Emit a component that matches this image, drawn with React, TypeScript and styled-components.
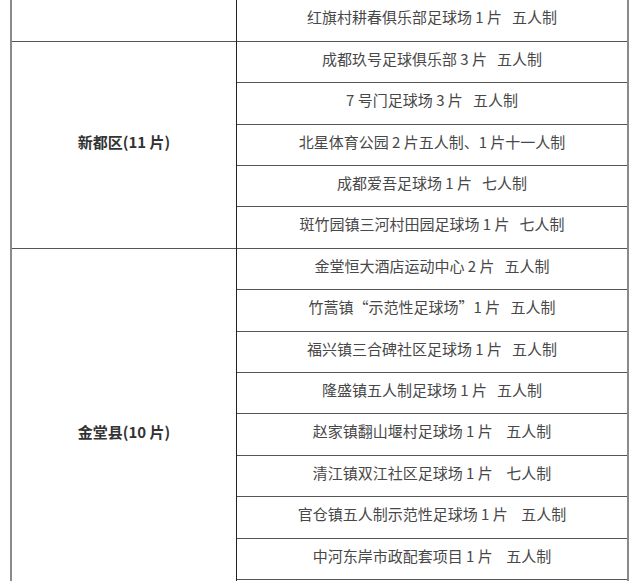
import styled, { createGlobalStyle } from "styled-components";

const districts = [
  {
    name: "",
    fields: ["红旗村耕春俱乐部足球场 1 片   五人制"],
  },
  {
    name: "新都区(11 片)",
    fields: [
      "成都玖号足球俱乐部 3 片   五人制",
      "7 号门足球场 3 片   五人制",
      "北星体育公园 2 片五人制、1 片十一人制",
      "成都爱吾足球场 1 片   七人制",
      "斑竹园镇三河村田园足球场 1 片   七人制",
    ],
  },
  {
    name: "金堂县(10 片)",
    // the last row runs past the bottom edge of the shot, so it stays blank
    fields: [
      "金堂恒大酒店运动中心 2 片   五人制",
      "竹蒿镇“示范性足球场”1 片   五人制",
      "福兴镇三合碑社区足球场 1 片   五人制",
      "隆盛镇五人制足球场 1 片   五人制",
      "赵家镇翻山堰村足球场 1 片    五人制",
      "清江镇双江社区足球场 1 片    七人制",
      "官仓镇五人制示范性足球场 1 片    五人制",
      "中河东岸市政配套项目 1 片    五人制",
      "",
    ],
  },
];

const GlobalStyle = createGlobalStyle`
  body {
    margin: 0;
    background: #ffffff;
    font-family: "Noto Sans CJK SC", "Liberation Sans", sans-serif;
  }
`;

const Page = styled.div`
  padding-left: 10px;
  overflow: hidden;
  height: 581px;
`;

const Table = styled.table`
  width: 619px;
  border-collapse: collapse;
  table-layout: fixed;
  border-left: 2px solid #8a8a8a;
  border-right: 2px solid #8a8a8a;
`;

const Row = styled.tr<{ $first?: boolean }>`
  height: 41.4px;
  & > td {
    border-top: ${(p) => (p.$first ? "none" : "1px solid #555")};
  }
`;

const DistrictCell = styled.td`
  width: 224px;
  border-right: 1px solid #222;
  text-align: center;
  vertical-align: middle;
  padding: 0 0 6px;
  font-size: 15px;
  font-weight: 700;
  color: #333;
  white-space: pre;
`;

const FieldCell = styled.td`
  text-align: center;
  vertical-align: top;
  padding: 6px 0 0;
  font-size: 15px;
  line-height: 22px;
  color: #484848;
  white-space: pre;
`;

export default function App() {
  return (
    <Page>
      <GlobalStyle />
      <Table>
        <tbody>
          {districts.map((d, di) =>
            d.fields.map((f, fi) => (
              <Row key={`${di}-${fi}`} $first={di === 0}>
                {fi === 0 && (
                  <DistrictCell rowSpan={d.fields.length}>{d.name}</DistrictCell>
                )}
                <FieldCell>{f}</FieldCell>
              </Row>
            ))
          )}
        </tbody>
      </Table>
    </Page>
  );
}
